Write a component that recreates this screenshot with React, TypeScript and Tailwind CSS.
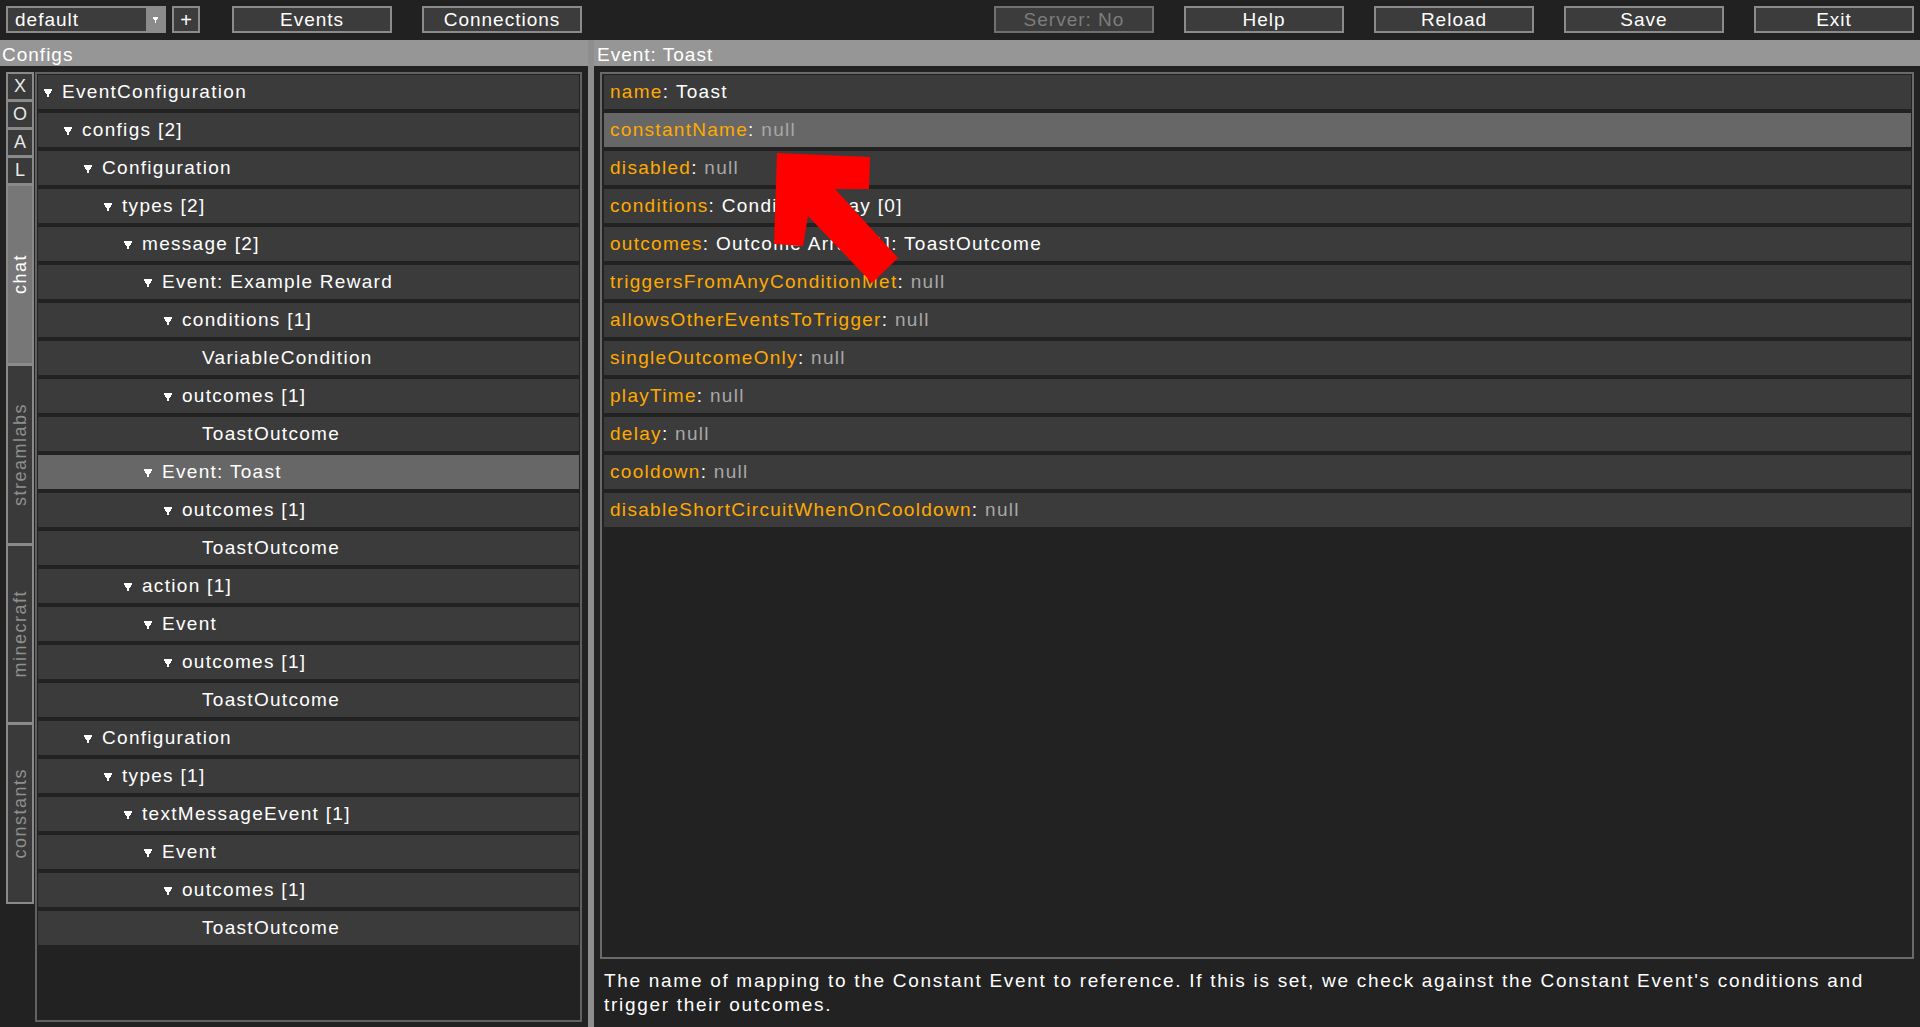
import React from "react";

const FONT = "[font-family:'Liberation_Sans',Arial,sans-serif]";

function TriDown({ className = "" }: { className?: string }) {
  return (
    <svg width="8" height="8" viewBox="0 0 8 8" className={className} shapeRendering="crispEdges">
      <rect x="0" y="0" width="8" height="2" fill="currentColor" />
      <rect x="1" y="2" width="6" height="2" fill="currentColor" />
      <rect x="2" y="4" width="4" height="1" fill="currentColor" />
      <rect x="3" y="5" width="2" height="3" fill="currentColor" />
    </svg>
  );
}

function Btn({ label, dim = false, className = "" }: { label: string; dim?: boolean; className?: string }) {
  return (
    <div
      className={
        "w-[160px] h-[27px] border-2 bg-[#3c3c3c] flex items-center justify-center pt-[2px] text-[19px] tracking-[1px] " +
        (dim ? "border-[#707070] text-[#7c7c7c] " : "border-[#8b8b8b] text-white ") +
        className
      }
    >
      {label}
    </div>
  );
}

type Node = { l: number; t: string; c: boolean; s?: boolean };

const tree: Node[] = [
  { l: 0, t: "EventConfiguration", c: true },
  { l: 1, t: "configs [2]", c: true },
  { l: 2, t: "Configuration", c: true },
  { l: 3, t: "types [2]", c: true },
  { l: 4, t: "message [2]", c: true },
  { l: 5, t: "Event: Example Reward", c: true },
  { l: 6, t: "conditions [1]", c: true },
  { l: 7, t: "VariableCondition", c: false },
  { l: 6, t: "outcomes [1]", c: true },
  { l: 7, t: "ToastOutcome", c: false },
  { l: 5, t: "Event: Toast", c: true, s: true },
  { l: 6, t: "outcomes [1]", c: true },
  { l: 7, t: "ToastOutcome", c: false },
  { l: 4, t: "action [1]", c: true },
  { l: 5, t: "Event", c: true },
  { l: 6, t: "outcomes [1]", c: true },
  { l: 7, t: "ToastOutcome", c: false },
  { l: 2, t: "Configuration", c: true },
  { l: 3, t: "types [1]", c: true },
  { l: 4, t: "textMessageEvent [1]", c: true },
  { l: 5, t: "Event", c: true },
  { l: 6, t: "outcomes [1]", c: true },
  { l: 7, t: "ToastOutcome", c: false },
];

type Prop = { k: string; v: string; nul?: boolean; s?: boolean };
const props: Prop[] = [
  { k: "name", v: "Toast" },
  { k: "constantName", v: "null", nul: true, s: true },
  { k: "disabled", v: "null", nul: true },
  { k: "conditions", v: "Condition Array [0]" },
  { k: "outcomes", v: "Outcome Array [1]: ToastOutcome" },
  { k: "triggersFromAnyConditionMet", v: "null", nul: true },
  { k: "allowsOtherEventsToTrigger", v: "null", nul: true },
  { k: "singleOutcomeOnly", v: "null", nul: true },
  { k: "playTime", v: "null", nul: true },
  { k: "delay", v: "null", nul: true },
  { k: "cooldown", v: "null", nul: true },
  { k: "disableShortCircuitWhenOnCooldown", v: "null", nul: true },
];

const indents = [
  "pl-[6px]",
  "pl-[26px]",
  "pl-[46px]",
  "pl-[66px]",
  "pl-[86px]",
  "pl-[106px]",
  "pl-[126px]",
  "pl-[146px]",
];

export default function App() {
  return (
    <div className={"relative w-[1920px] h-[1027px] bg-[#222222] flex flex-col overflow-hidden " + FONT}>
      {/* Top bar */}
      <div className="h-[40px] shrink-0 bg-[#212121] flex items-start pt-[6px] pl-[6px] pr-[6px]">
        <div className="w-[160px] h-[27px] border-2 border-[#8b8b8b] bg-[#3c3c3c] flex">
          <div className="flex-1 flex items-center pl-[7px] pt-[2px] text-white text-[19px] tracking-[1px]">default</div>
          <div className="w-[18px] h-full bg-[#8b8b8b] flex items-center justify-center text-white">
            <svg width="5" height="6" viewBox="0 0 5 6" shapeRendering="crispEdges">
              <rect x="0" y="0" width="5" height="2" fill="#fff" />
              <rect x="1" y="2" width="3" height="1" fill="#fff" />
              <rect x="2" y="3" width="1" height="3" fill="#fff" />
            </svg>
          </div>
        </div>
        <div className="ml-[6px] w-[28px] h-[27px] border-2 border-[#8b8b8b] bg-[#3c3c3c] flex items-center justify-center text-white text-[20px]">
          +
        </div>
        <Btn label="Events" className="ml-[32px]" />
        <Btn label="Connections" className="ml-[30px]" />
        <div className="flex-1" />
        <div className="flex gap-[30px]">
          <Btn label="Server: No" dim />
          <Btn label="Help" />
          <Btn label="Reload" />
          <Btn label="Save" />
          <Btn label="Exit" />
        </div>
      </div>

      {/* Body */}
      <div className="flex flex-1 min-h-0">
        {/* Left column */}
        <div className="w-[588px] shrink-0 flex flex-col">
          <div className="h-[26px] bg-[#969696] text-white text-[19px] tracking-[1px] leading-[24px] pt-[3px] pl-[2px]">Configs</div>
          <div className="flex pt-[6px] pl-[6px]">
            {/* tab strip */}
            <div className="w-[28px] h-[832px] bg-[#8a8a8a] p-[2px] flex flex-col gap-[3px]">
              {["X", "O", "A", "L"].map((c) => (
                <div key={c} className="h-[25px] bg-[#3a3a3a] flex items-center justify-center text-[#e8e8e8] text-[18px]">
                  {c}
                </div>
              ))}
              {[
                { t: "chat", a: true },
                { t: "streamlabs", a: false },
                { t: "minecraft", a: false },
                { t: "constants", a: false },
              ].map((tab) => (
                <div
                  key={tab.t}
                  className={
                    "h-[177px] flex items-center justify-center " +
                    (tab.a ? "bg-[#777777] text-white" : "bg-[#3a3a3a] text-[#8f8f8f]")
                  }
                >
                  <span className="[writing-mode:vertical-rl] rotate-180 text-[18px] tracking-[1.5px]">{tab.t}</span>
                </div>
              ))}
            </div>
            {/* tree frame */}
            <div className="ml-[1px] w-[547px] h-[950px] border-2 border-[#626262] p-[1px] flex flex-col gap-[4px]">
              {tree.map((n, i) => (
                <div
                  key={i}
                  className={
                    "h-[34px] shrink-0 flex items-center text-white text-[19px] tracking-[1.3px] " +
                    (n.s ? "bg-[#676767] " : "bg-[#3b3b3b] ") +
                    indents[n.l]
                  }
                >
                  <TriDown className={"mr-[10px] mt-[1px] text-white " + (n.c ? "" : "invisible")} />
                  <span>{n.t}</span>
                </div>
              ))}
            </div>
          </div>
        </div>

        {/* Splitter */}
        <div className="w-[6px] shrink-0 bg-[#8e8e8e]" />

        {/* Right column */}
        <div className="flex-1 flex flex-col">
          <div className="h-[26px] bg-[#969696] text-white text-[19px] tracking-[1px] leading-[24px] pt-[3px] pl-[3px]">Event: Toast</div>
          <div className="pt-[6px] pl-[6px]">
            <div className="w-[1314px] h-[887px] border-2 border-[#6a6a6a] pt-[1px] pl-[2px] pr-[1px] flex flex-col gap-[4px]">
              {props.map((p) => (
                <div
                  key={p.k}
                  className={
                    "h-[34px] shrink-0 flex items-center pl-[6px] text-[19px] tracking-[1.3px] " +
                    (p.s ? "bg-[#676767]" : "bg-[#3b3b3b]")
                  }
                >
                  <span className="text-[#ffaa00]">{p.k}</span>
                  <span className="text-white">:&nbsp;</span>
                  <span className={p.nul ? "text-[#a8a8a8]" : "text-white"}>{p.v}</span>
                </div>
              ))}
            </div>
            <div className="pl-[4px] pt-[10px] text-white text-[19px] leading-[24px] tracking-[1.7px] whitespace-nowrap">
              The name of mapping to the Constant Event to reference. If this is set, we check against the Constant Event's conditions and
              <br />
              trigger their outcomes.
            </div>
          </div>
        </div>
      </div>

      {/* Red annotation arrow */}
      <svg className="absolute inset-0 pointer-events-none" width="1920" height="1027" viewBox="0 0 1920 1027">
        <polygon
          points="777,153 870,157 869,189 835,189 898,258 872,283 808,216 803,246 774,244"
          fill="#ff0000"
        />
      </svg>
    </div>
  );
}
